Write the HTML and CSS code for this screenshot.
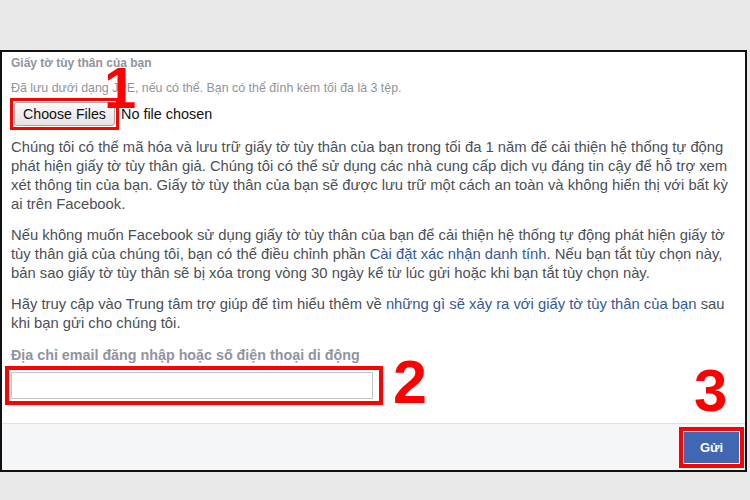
FILE: index.html
```html
<!DOCTYPE html>
<html lang="vi">
<head>
    <meta charset="UTF-8">
    <title>Giấy tờ tùy thân</title>
    <link rel="stylesheet" href="styles.css">
</head>
<body>
    <div class="dialog">
        <div class="content">
            <div class="label">Giấy tờ tùy thân của bạn</div>
            <div class="hint">Đã lưu dưới dạng JPE, nếu có thể. Bạn có thể đính kèm tối đa là 3 tệp.</div>
            <div class="file-row">
                <span class="mark mark-file"><button class="file-btn">Choose Files</button></span>
                <span class="file-name">No file chosen</span>
            </div>

            <p>Chúng tôi có thể mã hóa và lưu trữ giấy tờ tùy thân của bạn trong tối đa 1 năm để cải thiện hệ thống tự động phát hiện giấy tờ tùy thân giả. Chúng tôi có thể sử dụng các nhà cung cấp dịch vụ đáng tin cậy để hỗ trợ xem xét thông tin của bạn. Giấy tờ tùy thân của bạn sẽ được lưu trữ một cách an toàn và không hiển thị với bất kỳ ai trên Facebook.</p>
            <p>Nếu không muốn Facebook sử dụng giấy tờ tùy thân của bạn để cải thiện hệ thống tự động phát hiện giấy tờ tùy thân giả của chúng tôi, bạn có thể điều chỉnh phần <a href="#">Cài đặt xác nhận danh tính</a>. Nếu bạn tắt tùy chọn này, bản sao giấy tờ tùy thân sẽ bị xóa trong vòng 30 ngày kể từ lúc gửi hoặc khi bạn tắt tùy chọn này.</p>
            <p>Hãy truy cập vào Trung tâm trợ giúp để tìm hiểu thêm về <a href="#">những gì sẽ xảy ra với giấy tờ tùy thân của bạn</a> sau khi bạn gửi cho chúng tôi.</p>

            <div class="label label-email">Địa chỉ email đăng nhập hoặc số điện thoại di động</div>
            <span class="mark mark-input"><input type="text" class="text-input"></span>
        </div>
        <div class="footer">
            <span class="mark mark-send"><button class="send-btn">Gửi</button></span>
        </div>

        <!-- annotation numbers -->
        <span class="step step-1">1</span>
        <span class="step step-2">2</span>
        <span class="step step-3">3</span>
    </div>
</body>
</html>
```

FILE: styles.css
```css
body {
    margin: 0;
    background: #e9e9e9;
    font-family: "Liberation Sans", Arial, sans-serif;
    font-size: 14.8px;
    color: #4b4f56;
}
.dialog {
    position: relative;
    box-sizing: border-box;
    width: 747px;
    margin-top: 50px;
    background: #fff;
    border: 2px solid #111;
}
.content {
    padding: 2px 13px 18px 9px;
}
.label {
    font-weight: bold;
    font-size: 12px;
    line-height: 18px;
    color: #90949c;
}
.hint {
    margin-top: 7px;
    font-size: 12.4px;
    line-height: 18px;
    color: #90949c;
}
.file-row {
    display: flex;
    align-items: center;
    margin-top: 1px;
}
.mark {
    display: inline-block;
    border: 4px solid #f00;
    padding: 1px;
}
.mark-file {
    margin-left: -1px;
    border-width: 3px;
}
.file-btn {
    display: block;
    width: 101px;
    height: 24px;
    padding: 0;
    font-family: "Liberation Sans", Arial, sans-serif;
    font-size: 14.2px;
    color: #111;
    background: linear-gradient(#fafafa, #e4e4e4);
    border: 1px solid #a8a8a8;
    border-radius: 3px;
}
.file-name {
    margin-left: 2px;
    font-size: 14.4px;
    color: #111;
}
p {
    margin: 8px 0 12px;
    line-height: 19px;
}
a {
    color: #365899;
    text-decoration: none;
}
.label-email {
    font-size: 14.3px;
    margin-top: 13px;
}
.mark-input {
    margin-top: 2px;
    margin-left: -6px;
    padding: 2px 6px 2px 2px;
}
.text-input {
    display: block;
    box-sizing: border-box;
    width: 362px;
    height: 27px;
    margin: 0;
    border: 1px solid #c5c5c5;
    background: #fff;
}
.footer {
    display: flex;
    justify-content: flex-end;
    align-items: center;
    height: 46px;
    padding-right: 1px;
    background: #f5f6f7;
    border-top: 1px solid #e2e2e2;
}
.send-btn {
    display: block;
    width: 55px;
    height: 31px;
    padding: 0;
    font-family: "Liberation Sans", Arial, sans-serif;
    font-size: 13px;
    font-weight: bold;
    color: #fff;
    background: #4267b2;
    border: 1px solid #4267b2;
}
.step {
    position: absolute;
    font-size: 58px;
    font-weight: bold;
    line-height: 1;
    color: #f00;
}
.step-1 { left: 102px; top: 7px; }
.step-2 { left: 391px; top: 300px; font-size: 61px; }
.step-3 { left: 692px; top: 309px; font-size: 60px; }
```
